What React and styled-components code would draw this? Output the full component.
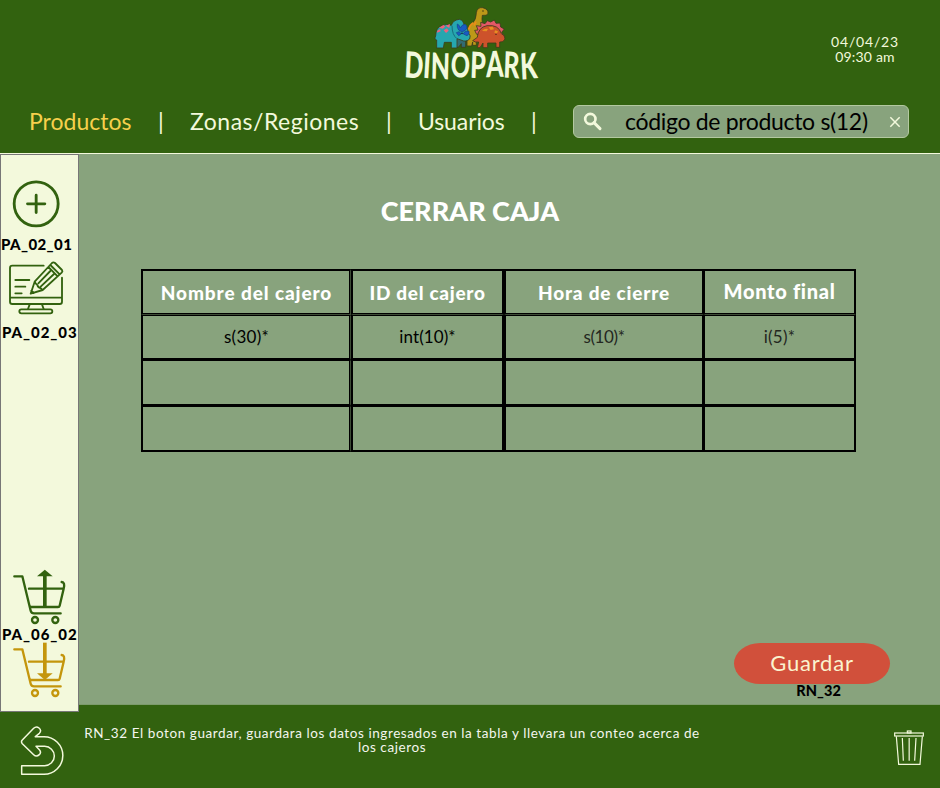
import React from "react";
import styled, { createGlobalStyle } from "styled-components";

const green = "#32620f";
const sage = "#88a37d";
const cream = "#f3f9dc";
const gold = "#c4960c";

const GlobalStyle = createGlobalStyle`
  * { box-sizing: border-box; }
  body { margin: 0; background: ${green}; font-family: Lato, sans-serif; }
  svg { display: block; overflow: visible; }
`;

const Page = styled.div`
  width: 940px;
  height: 788px;
  display: flex;
  flex-direction: column;
  overflow: hidden;
  background: ${green};
`;

const Header = styled.header`
  flex: none;
  height: 154px;
  border-bottom: 1px solid ${cream};
`;

const Banner = styled.div`
  display: grid;
  grid-template-columns: 404px 134px 1fr;
  height: 105px;
`;

const Brand = styled.div`
  grid-column: 2;
  display: flex;
  flex-direction: column;
  align-items: center;
  padding-top: 6px;
`;

const Wordmark = styled.div`
  display: flex;
  justify-content: center;
  height: 28px;
  line-height: 28px;
  font-size: 36px;
  font-weight: 900;
  color: ${cream};
  transform: scaleX(0.69);
`;

const Letter = styled.span`
  display: inline-block;
  transform: translateY(${(p) => p.$drop}px) rotate(${(p) => p.$tilt}deg) scale(${(p) => p.$scale || 1});
`;

const Clock = styled.div`
  justify-self: end;
  width: 100px;
  margin: 34px 25px 0 0;
  text-align: center;
  font-size: 14px;
  line-height: 15px;
  color: ${cream};
`;

const ClockLine = styled.div`
  letter-spacing: ${(p) => p.$spacing}px;
`;

const NavBar = styled.div`
  display: flex;
  align-items: center;
  height: 33px;
  padding-left: 29px;
`;

const Nav = styled.nav`
  display: flex;
  align-items: center;
  width: 544px;
`;

const NavItem = styled.a`
  width: ${(p) => p.$width}px;
  font-size: 23px;
  line-height: 33px;
  letter-spacing: ${(p) => p.$spacing}px;
  white-space: nowrap;
  color: ${(p) => (p.$active ? "#f6d04c" : cream)};
`;

const Divider = styled.span`
  width: 59px;
  padding-left: 1px;
  text-align: center;
  font-size: 23px;
  line-height: 33px;
  color: ${cream};
`;

const Search = styled.div`
  display: flex;
  align-items: center;
  width: 336px;
  height: 33px;
  padding: 0 7px 0 10px;
  border: 1px solid #b3c9a0;
  border-radius: 6px;
  background: ${sage};
`;

const SearchText = styled.span`
  flex: 1;
  padding-left: 23px;
  font-size: 23px;
  line-height: 33px;
  letter-spacing: -0.32px;
  white-space: nowrap;
  color: #000;
`;

const Body = styled.div`
  flex: none;
  display: flex;
  height: 551px;
`;

const Sidebar = styled.aside`
  position: relative;
  z-index: 1;
  display: flex;
  flex-direction: column;
  width: 79px;
  height: 558px;
  border: 1px solid #777;
  background: ${cream};
`;

const SideIcon = styled.div`
  height: ${(p) => p.$height}px;
  margin: ${(p) => p.$top}px 0 0 ${(p) => p.$left}px;
`;

const SideLabel = styled.div`
  height: 18px;
  margin: ${(p) => p.$top}px 0 0 ${(p) => p.$left}px;
  font-size: 15px;
  line-height: 18px;
  font-weight: 900;
  letter-spacing: ${(p) => p.$spacing}px;
  white-space: nowrap;
  color: #000;
`;

const Main = styled.main`
  display: flex;
  flex-direction: column;
  flex: 1;
  background: ${sage};
  border-bottom: 1px solid #7c9b6c;
`;

const Title = styled.h1`
  width: 782px;
  margin: 41px 0 0;
  text-align: center;
  font-size: 27px;
  line-height: 32px;
  font-weight: 900;
  color: #fff;
`;

const Table = styled.div`
  display: grid;
  grid-template-columns: 210px 153px 200px 152px;
  width: 715px;
  margin: 42px 0 0 62px;
`;

const Cell = styled.div`
  display: flex;
  align-items: center;
  justify-content: center;
  height: ${(p) => (p.$tall ? 46 : 45)}px;
  padding-bottom: 2px;
  border: solid #000;
  border-width: 1px 2px 2px;
  font-size: 17px;
  letter-spacing: ${(p) => p.$spacing || 0}px;
  white-space: nowrap;
  color: ${(p) => (p.$soft ? "#23271f" : "#000")};

  &:nth-child(4n + 1) {
    border-right: 1px solid #3c4b35;
    box-shadow: inset -1px 0 #000;
  }
  &:nth-child(4n) {
    border-left-width: 1px;
  }
`;

const HeadCell = styled(Cell)`
  height: 46px;
  border-width: 2px 2px 1px;
  border-bottom-color: #3c4b35;
  box-shadow: inset 0 -1px #000;
  font-size: ${(p) => p.$size}px;
  font-weight: 900;
  color: #fff;
  padding-bottom: ${(p) => p.$lift || 1}px;

  &:nth-child(4n + 1) {
    border-bottom-color: #3c4b35;
    box-shadow: inset -1px -1px #000;
  }
`;

const Actions = styled.div`
  display: flex;
  flex-direction: column;
  align-items: flex-end;
  margin-top: auto;
  padding-right: 50px;
`;

const SaveButton = styled.button`
  width: 156px;
  height: 41px;
  padding: 0 0 2px;
  border: 0;
  border-radius: 27px / 21px;
  background: #d1503b;
  font-family: inherit;
  font-size: 22px;
  line-height: 39px;
  letter-spacing: 0.8px;
  color: #fbf3cf;
`;

const SaveNote = styled.div`
  height: 20px;
  margin-right: 49px;
  font-size: 14.5px;
  line-height: 14px;
  font-weight: 900;
  letter-spacing: 0.1px;
  color: #000;
`;

const Footer = styled.footer`
  flex: 1;
  display: flex;
  align-items: flex-start;
  padding-top: 21px;
`;

const BackIcon = styled.div`
  width: 64px;
  padding-left: 20px;
`;

const Rule = styled.p`
  width: 656px;
  margin: 0;
  text-align: center;
  font-size: 13.5px;
  line-height: 14px;
  letter-spacing: 0.58px;
  white-space: nowrap;
  color: #f4f6ee;
`;

const TrashIcon = styled.div`
  margin: 4px 0 0 174px;
`;

const Dinos = () => (
  <svg width="72" height="44" viewBox="120 18 216 132" stroke="#3c3d1c" strokeWidth="2.5" strokeLinejoin="round">
    <path d="M216 138V112C206 92 222 78 233 69Q244 58 244 38Q247 21 263 23Q281 27 279 41Q276 48 262 46Q260 58 262 68Q260 105 244 120V136H233V126L230 138Z" fill="#bd9818" />
    <path d="M235 68Q223 75 222 88M243 65L237 77" stroke="#ed8b19" strokeWidth="5" fill="none" />
    <path d="M245 103L239 91L249 90L244 77L258 79L257 67L270 71L277 62L287 66L298 60L303 70L315 69L317 81L328 87L320 97L329 109Z" fill="#e45867" />
    <path d="M233 122L247 112Q249 82 276 77Q311 73 319 101Q330 105 330 117Q325 128 314 126V142H303V129H278V143H264V129L255 143H247L251 126Q241 128 233 122Z" fill="#cd522b" />
    <path d="M261 93Q269 84 279 87L275 94ZM281 82L293 80L297 88L287 90ZM300 91L309 94L306 100L298 98Z" fill="#e79022" stroke="none" />
    <path d="M185 115H212V142H199V131L190 142H182Z" fill="#326b72" />
    <path d="M125 144V120Q117 119 122 108Q122 82 141 77Q154 70 169 76Q174 60 193 58Q207 61 207 78Q222 87 220 99Q229 107 224 117Q212 128 198 120L186 116V144H169V127H148L145 144Z" fill="#26a7af" />
    <path d="M171 77Q171 105 186 116" stroke="#176d7d" strokeWidth="3" fill="none" />
    <path d="M191 90Q185 83 187 72Q194 75 196 84Q200 74 210 73Q221 80 212 90L201 96ZM205 102Q207 92 222 94Q224 103 216 107ZM184 98L193 95L198 102L191 107Z" fill="#195bc4" stroke="#174b91" />
    <path d="M132 83L145 75L151 79L144 86ZM126 93L135 87L137 94L127 98ZM152 77L165 72L163 84ZM146 91L156 85L161 92L153 99Z" fill="#ef617b" stroke="none" />
    <circle cx="201" cy="100" r="2.6" fill="#102f40" stroke="none" />
    <circle cx="264" cy="33" r="2" fill="#29270f" stroke="none" />
    <circle cx="303" cy="103" r="2" fill="#29270f" stroke="none" />
  </svg>
);

const Plus = () => (
  <svg width="47" height="47" viewBox="39.500 90.500 141 141" fill="none" stroke={green} strokeWidth="8.500" strokeLinecap="round">
    <circle cx="109" cy="162" r="66" />
    <path d="M83 162H135M109 136V188" />
  </svg>
);

const EditScreen = () => (
  <svg width="54" height="54" viewBox="27 335 162 162" fill="none" stroke={green} strokeWidth="5.500" strokeLinecap="round" strokeLinejoin="round">
    <path d="M131 349H37Q30 349 30 356V457Q30 464 37 464H179Q186 464 186 457V385M30 445H186" />
    <path d="M89 465L84 479M126 465L131 479M46 392H88M46 412H76M46 432H65" />
    <rect x="58" y="480" width="99" height="12" rx="6" />
    <path d="M92 433L104 397L156 341Q160 337 165 341L186 362Q189 366 185 370L128 422ZM104 397Q107 405 112 407Q114 415 121 416L128 422M145 353L173 381M151 347L179 375M115 402L151 365M122 412L162 374M94 424L101 431" />
  </svg>
);

const Cart = ({ color, down }) => (
  <svg width="53" height="56" viewBox="38 28 159 168" fill="none" stroke={color} strokeWidth="7" strokeLinecap="round" strokeLinejoin="round">
    <path d="M42 50H66L91 153Q93 161 101 161H181M86 87H188M91 142H173Q177 142 178 138L190 87Q195 68 184 67" />
    <circle cx="104" cy="181" r="9" />
    <circle cx="165" cy="181" r="9" />
    <path d={down ? "M133.500 30V124" : "M133.500 140V48"} strokeWidth="11" strokeLinecap="butt" />
    <path d={down ? "M110 122H157L133.500 142Z" : "M110 50H157L133.500 30Z"} fill={color} stroke="none" />
  </svg>
);

const Back = () => (
  <svg width="44" height="50" viewBox="61 498 132 150" fill="none" stroke={cream} strokeWidth="4.500" strokeLinejoin="round">
    <path d="M68 540L102 505Q110 497 118 504Q127 512 119 520L107 530H133A56.500 56.500 0 0 1 133 643H66V617H135A29 29 0 0 0 135 559H109L119 569Q126 577 119 584Q110 592 102 584L68 551Q63 545 68 540Z" />
  </svg>
);

const Trash = () => (
  <svg width="30" height="36" viewBox="522 301 90 108" fill="none" stroke={cream} strokeWidth="3.600">
    <rect x="524" y="310" width="86" height="9" />
    <rect x="562" y="304" width="11" height="6" />
    <path d="M529 320L536 404H600L607 320M547 325L550 393M567.500 325V393M588 325L584 393" />
  </svg>
);

const Magnifier = () => (
  <svg width="18" height="18" viewBox="71 69 54 54" fill="none" stroke={cream} strokeWidth="8">
    <circle cx="90" cy="87" r="15.500" />
    <path d="M101 98L119 116" strokeWidth="9" strokeLinecap="round" />
  </svg>
);

const Close = () => (
  <svg width="12" height="12" viewBox="986 77 36 36" stroke={cream} strokeWidth="4.500">
    <path d="M990 81L1018 109M1018 81L990 109" />
  </svg>
);

const letters = [
  ["D", 0, 4], ["I", 0, 5], ["N", 1, 2], ["O", 0, 4, 0.95],
  ["P", 0, 3], ["A", -1, -1], ["R", 0, 3], ["K", 1, -4],
];

export default function App() {
  return (
    <Page>
      <GlobalStyle />
      <Header>
        <Banner>
          <Brand>
            <Dinos />
            <Wordmark>
              {letters.map(([char, drop, tilt, scale]) => (
                <Letter key={char} $drop={drop} $tilt={tilt} $scale={scale}>{char}</Letter>
              ))}
            </Wordmark>
          </Brand>
          <Clock>
            <ClockLine $spacing={0.8}>04/04/23</ClockLine>
            <ClockLine $spacing={0.2}>09:30 am</ClockLine>
          </Clock>
        </Banner>
        <NavBar>
          <Nav>
            <NavItem $active $width={102} $spacing={0}>Productos</NavItem>
            <Divider>|</Divider>
            <NavItem $width={169} $spacing={0.5}>Zonas/Regiones</NavItem>
            <Divider>|</Divider>
            <NavItem $width={86} $spacing={-0.1}>Usuarios</NavItem>
            <Divider>|</Divider>
          </Nav>
          <Search>
            <Magnifier />
            <SearchText>código de producto s(12)</SearchText>
            <Close />
          </Search>
        </NavBar>
      </Header>
      <Body>
        <Sidebar>
          <SideIcon $top={25} $left={12} $height={47}><Plus /></SideIcon>
          <SideLabel $top={8} $left={0} $spacing={0.4}>PA_02_01</SideLabel>
          <SideIcon $top={8} $left={8} $height={54}><EditScreen /></SideIcon>
          <SideLabel $top={8} $left={1} $spacing={0.95}>PA_02_03</SideLabel>
          <SideIcon $top={228} $left={12} $height={56}><Cart color={green} /></SideIcon>
          <SideLabel $top={0} $left={1} $spacing={0.95}>PA_06_02</SideLabel>
          <SideIcon $top={-1} $left={12} $height={56}><Cart color={gold} down /></SideIcon>
        </Sidebar>
        <Main>
          <Title>CERRAR CAJA</Title>
          <Table>
            <HeadCell $size={19} $spacing={0.9}>Nombre del cajero</HeadCell>
            <HeadCell $size={19} $spacing={0.7}>ID del cajero</HeadCell>
            <HeadCell $size={19} $spacing={0.8}>Hora de cierre</HeadCell>
            <HeadCell $size={20} $lift={4} $spacing={0.7}>Monto final</HeadCell>
            <Cell $spacing={0.3}>s(30)*</Cell>
            <Cell $spacing={0.1}>int(10)*</Cell>
            <Cell $soft $spacing={-0.4}>s(10)*</Cell>
            <Cell $soft $spacing={0.3}>i(5)*</Cell>
            <Cell $tall /><Cell $tall /><Cell $tall /><Cell $tall />
            <Cell $tall /><Cell $tall /><Cell $tall /><Cell $tall />
          </Table>
          <Actions>
            <SaveButton>Guardar</SaveButton>
            <SaveNote>RN_32</SaveNote>
          </Actions>
        </Main>
      </Body>
      <Footer>
        <BackIcon><Back /></BackIcon>
        <Rule>
          RN_32 El boton guardar, guardara los datos ingresados en la tabla y llevara un conteo acerca de
          <br />
          los cajeros
        </Rule>
        <TrashIcon><Trash /></TrashIcon>
      </Footer>
    </Page>
  );
}
